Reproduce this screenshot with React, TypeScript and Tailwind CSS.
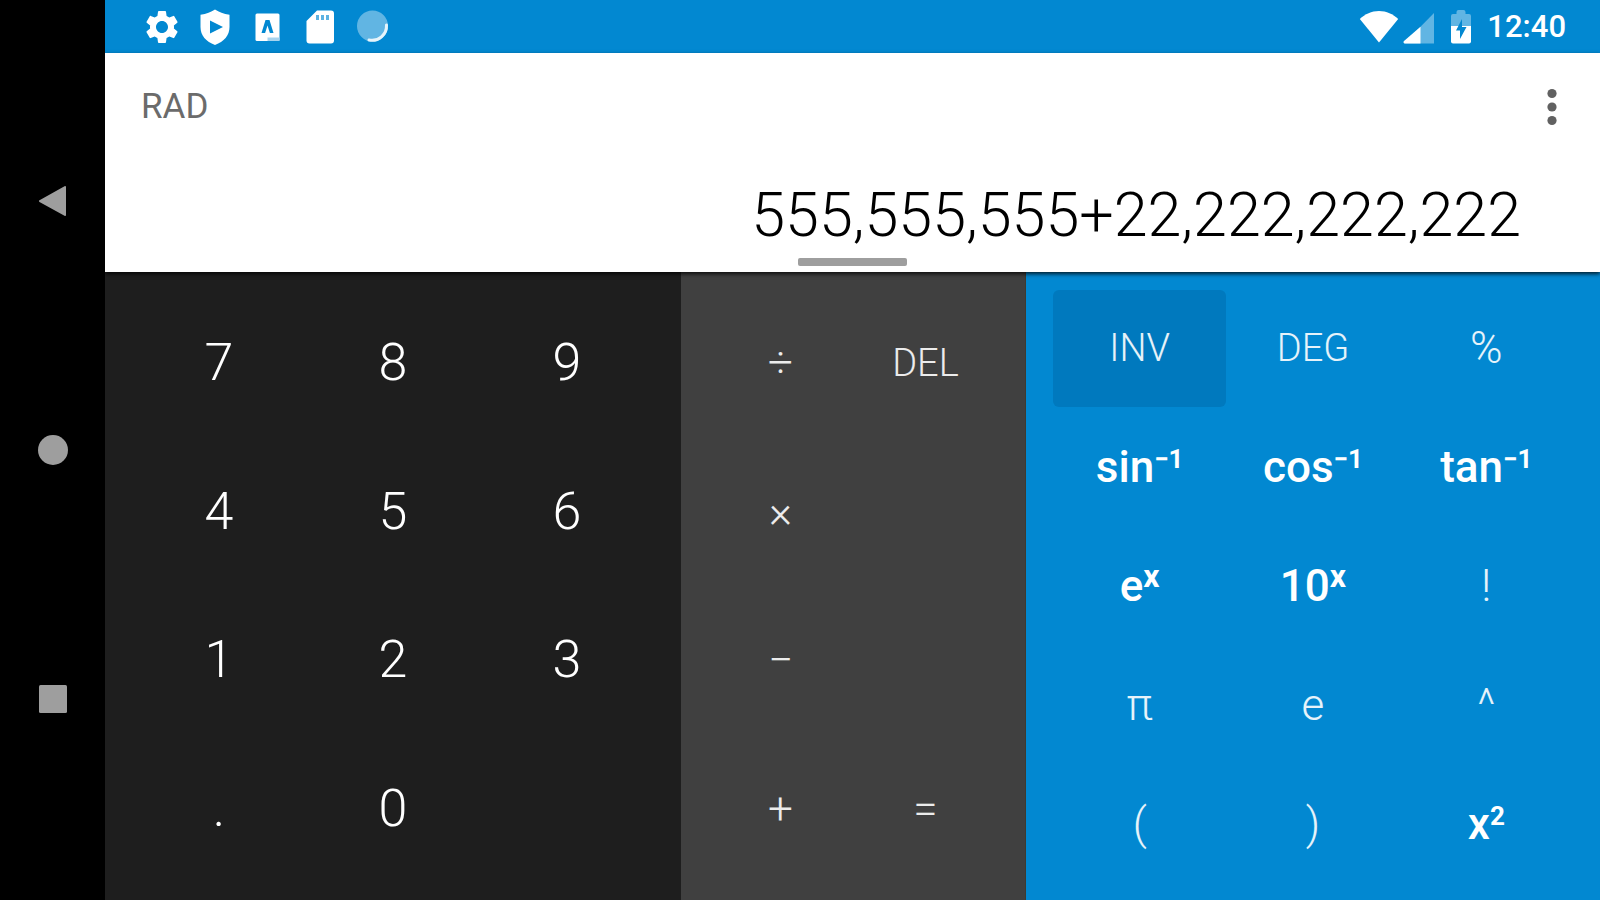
import { MdSettings } from "react-icons/md";

const digitKeys = ["7", "8", "9", "4", "5", "6", "1", "2", "3", ".", "0"];

const operatorKeys = ["÷", "DEL", "×", "", "−", "", "+", "="];

const functionKeys = [
    { label: "INV", kind: "active" },
    { label: "DEG", kind: "mode" },
    { label: "%", kind: "plain" },
    { label: "sin", sup: "−1", kind: "bold" },
    { label: "cos", sup: "−1", kind: "bold" },
    { label: "tan", sup: "−1", kind: "bold" },
    { label: "e", sup: "x", kind: "bold" },
    { label: "10", sup: "x", kind: "bold" },
    { label: "!", kind: "plain" },
    { label: "π", kind: "plain" },
    { label: "e", kind: "plain" },
    { label: "^", kind: "plain" },
    { label: "(", kind: "plain" },
    { label: ")", kind: "plain" },
    { label: "x", sup: "2", kind: "bold" },
];

const functionStyles: Record<string, string> = {
    active: "bg-[#0079be] text-[38px] font-light text-white/90",
    mode: "text-[38px] font-light text-white/90",
    plain: "text-[44px] font-light text-white/90",
    bold: "text-[44px] font-medium text-white",
};

const NavBar = () => {
    return (
        <nav className="flex w-[105px] shrink-0 flex-col items-center justify-center gap-[209px] bg-black">
            <button aria-label="Back" className="flex h-10 w-10 items-center justify-center">
                <svg width="30" height="32" viewBox="0 0 30 32" fill="#9e9e9e">
                    <path d="M28 2v28a1 1 0 0 1-1.500.8L1.500 17a1 1 0 0 1 0-1.800L26.500 1.200A1 1 0 0 1 28 2z" />
                </svg>
            </button>
            <button aria-label="Home" className="flex h-10 w-10 items-center justify-center">
                <svg width="30" height="30" viewBox="0 0 30 30" fill="#9e9e9e">
                    <circle cx="15" cy="15" r="15" />
                </svg>
            </button>
            <button aria-label="Overview" className="flex h-10 w-10 items-center justify-center">
                <svg width="30" height="30" viewBox="0 0 30 30" fill="#9e9e9e">
                    <rect x="1" y="1" width="28" height="28" rx="1.500" />
                </svg>
            </button>
        </nav>
    );
};

const StatusBar = () => {
    return (
        <div className="flex h-[53px] items-center justify-between bg-[#0288d1] pr-[34px] pl-[37px] text-white">
            <div className="flex items-center gap-[13px]">
                <MdSettings size={40} />
                <svg width="40" height="40" viewBox="0 0 40 40">
                    <path d="M20 2.500c4 2.800 8.500 4.300 14.500 5.200V20c0 8.500-5.500 14.500-14.500 18C11 34.500 5.500 28.500 5.500 20V7.700C11.500 6.800 16 5.300 20 2.500z" fill="#fff" />
                    <path d="M15 13.500 28 20l-13 6.500z" fill="#0288d1" />
                </svg>
                <svg width="40" height="40" viewBox="0 0 40 40">
                    <rect x="7.500" y="6.500" width="24" height="27.500" rx="1.500" fill="#fff" />
                    <path d="M19.500 30.500h12V34h-12z" fill="#a6d3ee" />
                    <path d="m13.500 26 4-13h4l4 13h-3.600l-2.400-7.500-2.400 7.500z" fill="#0288d1" />
                </svg>
                <svg width="40" height="40" viewBox="0 0 40 40">
                    <path d="M16 3.500h14a3 3 0 0 1 3 3v27a3 3 0 0 1-3 3H8.500a3 3 0 0 1-3-3V14z" fill="#fff" />
                    <path d="M15 8h3v5h-3zM20 8h3v5h-3zM25 8h3v5h-3z" fill="#5cb2e2" />
                </svg>
                <svg width="40" height="40" viewBox="0 0 40 40">
                    <circle cx="18.500" cy="19" r="15.500" fill="#61b5e3" />
                    <path d="M32.500 18A14.500 14.500 0 0 1 15 33" fill="none" stroke="#e6f4fb" strokeWidth="3" strokeLinecap="round" />
                </svg>
            </div>
            <div className="flex items-center">
                <svg width="40" height="40" viewBox="0 0 40 40">
                    <path d="M20 35.500.800 12C6 7 12.500 4 20 4s14 3 19.200 8z" fill="#fff" />
                </svg>
                <svg className="ml-1" width="32" height="40" viewBox="0 0 32 40">
                    <path d="M31 6v30.500H1z" fill="#61b5e3" />
                    <path d="M17.500 19.800v16.700H2c-1.500 0-2-1.500-1-2.500z" fill="#fff" />
                </svg>
                <svg className="ml-[15px]" width="22" height="40" viewBox="0 0 22 40">
                    <path d="M6.500 7V5a2 2 0 0 1 2-2h5a2 2 0 0 1 2 2v2H19a2 2 0 0 1 2 2v10H1V9a2 2 0 0 1 2-2z" fill="#61b5e3" />
                    <path d="M1 19h20v15.500a2 2 0 0 1-2 2H3a2 2 0 0 1-2-2z" fill="#fff" />
                    <path d="M12 12v8h4.500L10 32v-8.500H6z" fill="#0288d1" />
                </svg>
                <time className="ml-[15px] text-[31px] leading-10 font-medium">12:40</time>
            </div>
        </div>
    );
};

const Display = () => {
    return (
        <div className="relative z-10 flex flex-col bg-white pt-7 pb-[6px] shadow-[0_2px_4px_rgba(0,0,0,0.8)]">
            <div className="flex h-[52px] items-center justify-between pr-[28px] pl-9">
                <span className="text-[35px] text-[#6b6b6b]">RAD</span>
                <button aria-label="More options" className="flex h-10 w-10 items-center justify-center">
                    <svg width="10" height="38" viewBox="0 0 10 38" fill="#616161">
                        <circle cx="5" cy="5.500" r="4.600" />
                        <circle cx="5" cy="19" r="4.600" />
                        <circle cx="5" cy="32.500" r="4.600" />
                    </svg>
                </button>
            </div>
            <output className="mt-[42px] pr-[79px] text-right text-[61px] leading-[80px] font-light text-black">
                555,555,555+22,222,222,222
            </output>
            <div className="mt-[3px] h-2 w-[109px] self-center rounded-xs bg-[#9e9e9e]" />
        </div>
    );
};

const App = () => {
    return (
        <div className="flex min-h-screen bg-black font-['Roboto',sans-serif]">
            <NavBar />
            <div className="flex flex-1 flex-col">
                <StatusBar />
                <Display />
                <main className="grid flex-1 grid-cols-[576fr_344fr_575fr]">
                    <div className="grid grid-cols-3 grid-rows-4 bg-[#1e1e1e] px-[27px] py-[17px]">
                        {digitKeys.map((key) => (
                            <button key={key} className="text-[52px] font-light text-white">
                                {key}
                            </button>
                        ))}
                    </div>
                    <div className="grid grid-cols-2 grid-rows-4 bg-[#404040] px-[27px] py-[17px]">
                        {operatorKeys.map((key, i) =>
                            key ? (
                                <button key={i} className={`font-light text-white/90 ${key === "DEL" ? "text-[38px]" : "text-[44px]"}`}>
                                    {key}
                                </button>
                            ) : (
                                <span key={i} />
                            )
                        )}
                    </div>
                    <div className="grid grid-cols-3 grid-rows-5 border-l border-[#3f3a30] bg-[#0288d1] px-[27px] py-[17px]">
                        {functionKeys.map((key, i) => (
                            <button key={i} className={`my-px rounded-md ${functionStyles[key.kind]}`}>
                                {key.label}
                                {key.sup && (
                                    <sup className={`-top-[14px] font-bold ${key.sup === "x" ? "text-[32px]" : "text-[26px]"}`}>
                                        {key.sup}
                                    </sup>
                                )}
                            </button>
                        ))}
                    </div>
                </main>
            </div>
        </div>
    );
};

export default App;
